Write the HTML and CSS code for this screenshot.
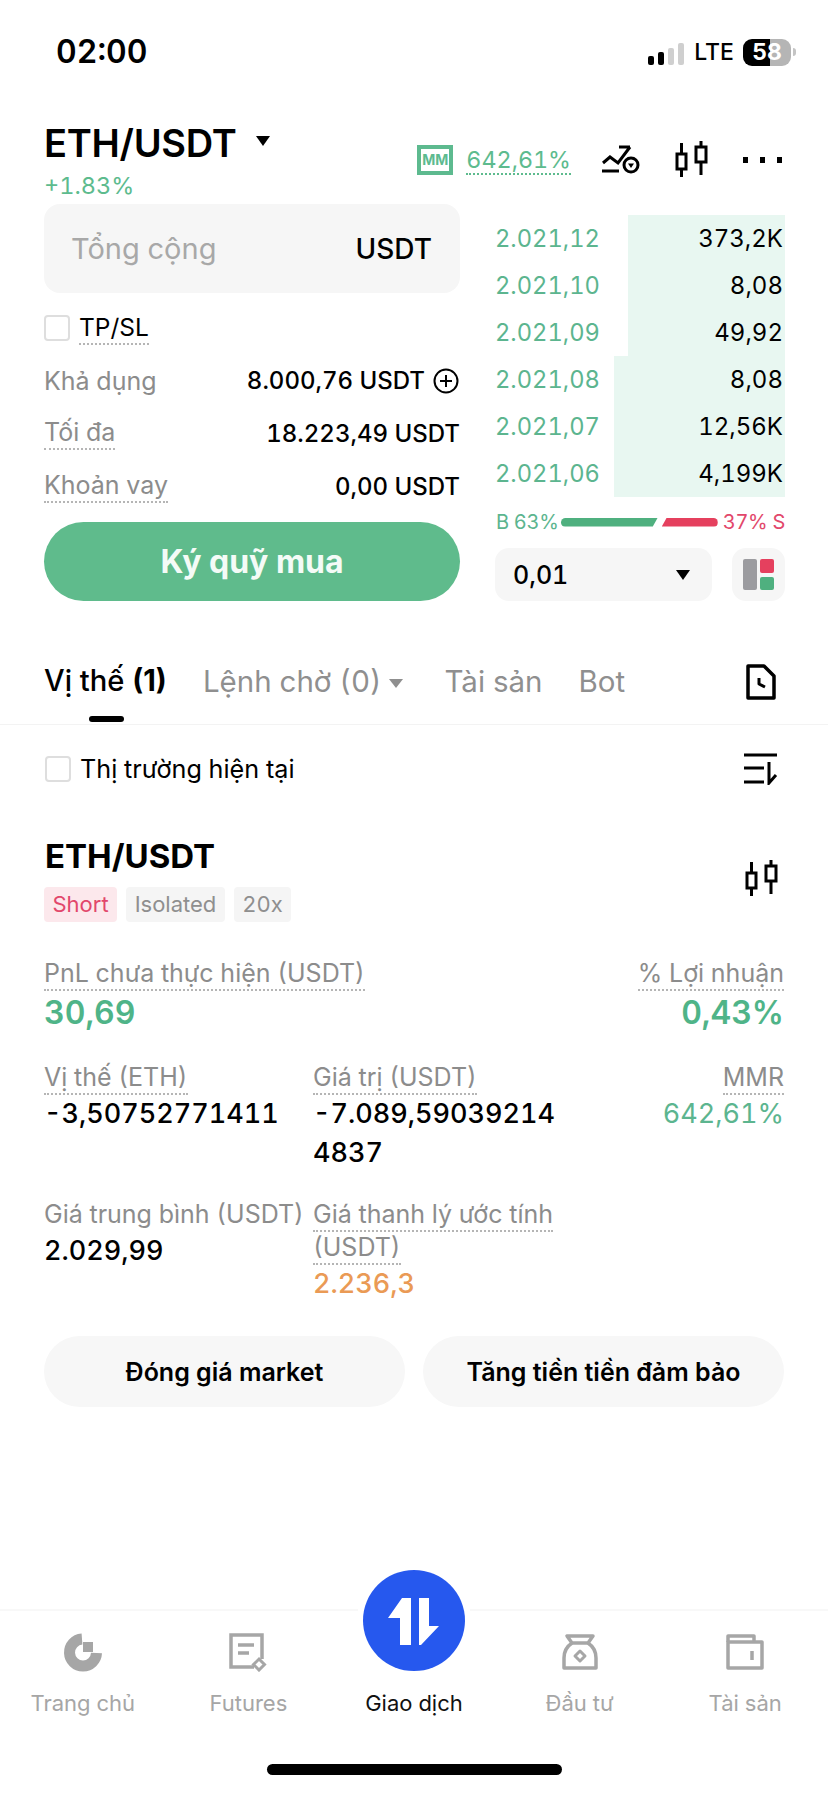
FILE: index.html
```html
<!DOCTYPE html>
<html lang="vi">
<head>
    <meta charset="UTF-8">
    <meta name="viewport" content="width=device-width, initial-scale=1.0">
    <title>ETH/USDT</title>
    <link rel="stylesheet" href="styles.css">
</head>
<body>

    <div class="status">
        <span class="time">02:00</span>
        <div class="status-right">
            <div class="signal">
                <i class="on h1"></i><i class="on h2"></i><i class="h3"></i><i class="h4"></i>
            </div>
            <span class="lte">LTE</span>
            <div class="battery">58</div>
            <i class="nub"></i>
        </div>
    </div>

    <div class="pair-bar">
        <div>
            <div class="pair">ETH/USDT <i class="caret caret-big"></i></div>
            <div class="change">+1.83%</div>
        </div>
        <div class="pair-tools">
            <span class="mm">MM</span>
            <span class="mm-val">642,61%</span>
            <svg class="ic-order" width="40" height="30" viewBox="0 0 40 30" fill="none" stroke="#000" stroke-width="3">
                <path d="M2 18l7-6 8 6L29 2M18 2h11"/>
                <path d="M1 26h17"/>
                <circle cx="30" cy="20" r="7" fill="#fff"/>
                <path d="M27 18.500h6L30 23z" fill="#000" stroke="none"/>
            </svg>
            <svg class="ic-candle" width="34" height="36" viewBox="0 0 34 36" fill="none" stroke="#000" stroke-width="3">
                <rect x="2" y="13" width="9" height="15"/>
                <rect x="21" y="6" width="10" height="15"/>
                <path d="M6.500 2v11M6.500 28v8M26 0v6M26 21v13"/>
            </svg>
            <div class="dots"><i></i><i></i><i></i></div>
        </div>
    </div>

    <div class="trade">
        <div class="trade-left">
            <div class="total-input">
                <span class="placeholder">Tổng cộng</span>
                <span class="unit">USDT</span>
            </div>
            <div class="check-row tpsl">
                <i class="checkbox"></i>
                <span class="dotted">TP/SL</span>
            </div>
            <div class="info-row">
                <span class="info-label">Khả dụng</span>
                <span class="info-val">8.000,76 USDT
                    <svg width="26" height="26" viewBox="0 0 26 26" fill="none" stroke="#000" stroke-width="2">
                        <circle cx="13" cy="13" r="11.500"/>
                        <path d="M13 7v12M7 13h12"/>
                    </svg>
                </span>
            </div>
            <div class="info-row">
                <span class="info-label dotted">Tối đa</span>
                <span class="info-val">18.223,49 USDT</span>
            </div>
            <div class="info-row">
                <span class="info-label dotted">Khoản vay</span>
                <span class="info-val">0,00 USDT</span>
            </div>
            <button class="buy-btn">Ký quỹ mua</button>
        </div>

        <div class="trade-right">
            <div class="book">
                <div class="book-row"><i class="depth" style="width: 157px"></i><span class="price">2.021,12</span><span class="vol">373,2K</span></div>
                <div class="book-row"><i class="depth" style="width: 157px"></i><span class="price">2.021,10</span><span class="vol">8,08</span></div>
                <div class="book-row"><i class="depth" style="width: 157px"></i><span class="price">2.021,09</span><span class="vol">49,92</span></div>
                <div class="book-row"><i class="depth" style="width: 171px"></i><span class="price">2.021,08</span><span class="vol">8,08</span></div>
                <div class="book-row"><i class="depth" style="width: 171px"></i><span class="price">2.021,07</span><span class="vol">12,56K</span></div>
                <div class="book-row"><i class="depth" style="width: 171px"></i><span class="price">2.021,06</span><span class="vol">4,199K</span></div>
            </div>
            <div class="ratio">
                <span class="ratio-b">B 63%</span>
                <i class="bar-b"></i>
                <i class="bar-s"></i>
                <span class="ratio-s">37% S</span>
            </div>
            <div class="depth-tools">
                <div class="depth-select">
                    <span>0,01</span>
                    <i class="caret caret-big"></i>
                </div>
                <div class="layout-btn">
                    <i class="lay-gray"></i>
                    <div class="lay-col"><i class="lay-red"></i><i class="lay-green"></i></div>
                </div>
            </div>
        </div>
    </div>

    <div class="tabs">
        <span class="tab active">Vị thế <b>(1)</b></span>
        <span class="tab tab-drop">Lệnh chờ (0) <i class="caret caret-gray"></i></span>
        <span class="tab">Tài sản</span>
        <span class="tab">Bot</span>
        <svg class="ic-history" width="30" height="36" viewBox="0 0 30 36" fill="none" stroke="#000" stroke-width="3.500" stroke-linejoin="round">
            <path d="M2 2h16l10 10v22H2z"/>
            <path d="M13 14v6l6 3" stroke-width="3"/>
        </svg>
    </div>

    <div class="filter-row">
        <div class="check-row">
            <i class="checkbox"></i>
            <span class="filter-text">Thị trường hiện tại</span>
        </div>
        <svg width="34" height="32" viewBox="0 0 34 32" fill="none" stroke="#000" stroke-width="3">
            <path d="M0 2h33M0 15h20M0 29h20M25 9v21l7-8"/>
        </svg>
    </div>

    <div class="position">
        <div class="position-head">
            <div class="position-title">ETH/USDT</div>
            <svg class="ic-candle-small" width="34" height="38" viewBox="0 0 34 36" fill="none" stroke="#000" stroke-width="3">
                <rect x="2" y="13" width="9" height="15"/>
                <rect x="21" y="6" width="10" height="15"/>
                <path d="M6.500 2v11M6.500 28v8M26 0v6M26 21v13"/>
            </svg>
        </div>
        <div class="tags">
            <span class="tag tag-short">Short</span>
            <span class="tag">Isolated</span>
            <span class="tag">20x</span>
        </div>

        <div class="stat-head">
            <div>
                <div class="stat-label"><span class="dotted">PnL chưa thực hiện (USDT)</span></div>
                <div class="stat-big green">30,69</div>
            </div>
            <div class="right">
                <div class="stat-label"><span class="dotted">% Lợi nhuận</span></div>
                <div class="stat-big green">0,43%</div>
            </div>
        </div>

        <div class="stat-grid">
            <div>
                <div class="stat-label"><span class="dotted">Vị thế (ETH)</span></div>
                <div class="stat-val">-3,50752771411</div>
            </div>
            <div>
                <div class="stat-label"><span class="dotted">Giá trị (USDT)</span></div>
                <div class="stat-val">-7.089,59039214<br>4837</div>
            </div>
            <div class="right">
                <div class="stat-label"><span class="dotted">MMR</span></div>
                <div class="stat-val mmr-val">642,61%</div>
            </div>
            <div>
                <div class="stat-label">Giá trung bình (USDT)</div>
                <div class="stat-val">2.029,99</div>
            </div>
            <div>
                <div class="stat-label"><span class="dotted">Giá thanh lý ước tính<br>(USDT)</span></div>
                <div class="stat-val orange">2.236,3</div>
            </div>
        </div>

        <div class="actions">
            <button class="action-btn">Đóng giá market</button>
            <button class="action-btn">Tăng tiền tiền đảm bảo</button>
        </div>
    </div>

    <div class="nav">
        <div class="nav-items">
            <div class="nav-item">
                <svg width="40" height="40" viewBox="0 0 40 40" fill="none">
                    <path d="M19 7A13.500 13.500 0 1 0 33.500 21" stroke="#a6a6a6" stroke-width="11"/>
                    <rect x="20" y="10" width="10" height="10" fill="#a6a6a6"/>
                </svg>
                <span>Trang chủ</span>
            </div>
            <div class="nav-item">
                <svg width="40" height="40" viewBox="0 0 40 40" fill="none" stroke="#a6a6a6" stroke-width="3.500">
                    <path d="M26 35H3V3h31v24"/>
                    <path d="M10 13h16M10 21h11"/>
                    <path d="M31 27l5.500 5.500L31 38l-5.500-5.500z" stroke-width="3"/>
                </svg>
                <span>Futures</span>
            </div>
            <div class="nav-item nav-active">
                <div class="trade-circle">
                    <svg width="102" height="101" viewBox="0 0 102 101" fill="#fff">
                        <path d="M48 28v47H37V48H25l14-20z"/>
                        <path d="M56 28h10v28h10L58 75h-2z"/>
                    </svg>
                </div>
                <i class="nav-spacer"></i>
                <span>Giao dịch</span>
            </div>
            <div class="nav-item">
                <svg width="40" height="40" viewBox="0 0 40 40" fill="none" stroke="#a6a6a6" stroke-width="3.500" stroke-linejoin="round">
                    <path d="M7 4h26l-5 7H12z"/>
                    <path d="M12 11C6 15 4 21 4 26v10h32V26c0-5-2-11-8-15"/>
                    <path d="M20 19l5 5-5 5-5-5z" stroke-width="3"/>
                </svg>
                <span>Đầu tư</span>
            </div>
            <div class="nav-item">
                <svg width="40" height="40" viewBox="0 0 40 40" fill="none" stroke="#a6a6a6" stroke-width="3.500" stroke-linejoin="round">
                    <path d="M3 10V4h26v6"/>
                    <path d="M3 10h34v26H3z"/>
                    <path d="M27 19v9"/>
                </svg>
                <span>Tài sản</span>
            </div>
        </div>
        <div class="home-bar"></div>
    </div>

</body>
</html>
```

FILE: styles.css
```css
* {
    box-sizing: border-box;
}
body {
    margin: 0;
    width: 828px;
    height: 1793px;
    overflow: hidden;
    display: flex;
    flex-direction: column;
    font-family: Inter, "Noto Sans", sans-serif;
    font-variant-numeric: tabular-nums;
    background-color: #fff;
    color: #000;
}
i {
    display: block;
}
button {
    font-family: inherit;
    border: none;
    cursor: pointer;
}
.green {
    color: #4fb488;
}
.orange {
    color: #ea9a55;
}
.right {
    text-align: right;
}
.dotted {
    padding-bottom: 1px;
    border-bottom: 2px dotted #b5b5b5;
}
.caret {
    width: 0;
    height: 0;
    border-style: solid;
    border-color: #000 transparent transparent;
}
.caret-big {
    border-width: 10px 7px 0;
}
.caret-gray {
    display: inline-block;
    vertical-align: middle;
    margin-left: 0;
    border-width: 9px 7px 0;
    border-top-color: #8f8f8f;
}

/* status bar */
.status {
    height: 100px;
    flex: none;
    display: flex;
    justify-content: space-between;
    align-items: center;
    padding: 2px 32px 0 56px;
}
.time {
    font-size: 32px;
    font-weight: 600;
}
.status-right {
    display: flex;
    align-items: center;
    margin-top: 2px;
}
.signal {
    display: flex;
    align-items: flex-end;
    gap: 4px;
    height: 22px;
    margin-top: 3px;
}
.signal i {
    width: 6px;
    border-radius: 2px;
    background-color: #cfcfcf;
}
.signal .on {
    background-color: #000;
}
.h1 { height: 9px; }
.h2 { height: 13px; }
.h3 { height: 17px; }
.h4 { height: 22px; }
.lte {
    margin-left: 10px;
    font-size: 23px;
    font-weight: 500;
}
.battery {
    width: 48px;
    height: 27px;
    margin-left: 9px;
    border-radius: 9px;
    background: linear-gradient(90deg, #000 56%, #b5b5b5 56%);
    color: #fff;
    font-size: 23px;
    font-weight: 700;
    line-height: 27px;
    text-align: center;
}
.nub {
    width: 3px;
    height: 8px;
    margin-left: 2px;
    border-radius: 0 3px 3px 0;
    background-color: #c4c4c4;
}

/* pair header */
.pair-bar {
    height: 104px;
    flex: none;
    display: flex;
    justify-content: space-between;
    padding: 23px 46px 0 44px;
}
.pair {
    display: flex;
    align-items: center;
    gap: 20px;
    font-size: 38px;
    font-weight: 600;
    line-height: 40px;
    letter-spacing: -0.3px;
}
.pair .caret {
    margin-top: -4px;
}
.change {
    margin-top: 10px;
    font-size: 23.500px;
    line-height: 26px;
    color: #5dbb8e;
}
.pair-tools {
    display: flex;
    align-items: flex-start;
    margin-top: 18px;
    margin-left: auto;
}
.mm {
    width: 36px;
    height: 30px;
    margin-top: 4px;
    border: 4px solid #5dba8f;
    color: #5dba8f;
    font-size: 14px;
    font-weight: 700;
    line-height: 22px;
    text-align: center;
}
.mm-val {
    margin-left: 13px;
    margin-top: 5px;
    font-size: 23.300px;
    line-height: 27px;
    color: #5dbb8e;
    border-bottom: 2px dotted #5dbb8e;
}
.ic-order {
    margin-left: 30px;
    margin-top: 4px;
}
.ic-candle {
    margin-left: 34px;
}
.dots {
    display: flex;
    gap: 12px;
    margin-left: 34px;
    margin-top: 16px;
}
.dots i {
    width: 5px;
    height: 6px;
    background-color: #000;
}

/* order form + order book */
.trade {
    flex: none;
    display: flex;
    gap: 35px;
    padding-left: 44px;
}
.trade-left {
    width: 416px;
}
.total-input {
    height: 89px;
    display: flex;
    justify-content: space-between;
    align-items: center;
    padding: 0 28px 0 27px;
    border-radius: 16px;
    background-color: #f6f6f6;
}
.placeholder {
    font-size: 29px;
    color: #a8a8a8;
}
.unit {
    font-size: 28px;
    font-weight: 500;
}
.check-row {
    display: flex;
    align-items: center;
    gap: 9px;
    font-size: 24.500px;
}
.tpsl {
    margin-top: 22px;
    height: 26px;
}
.checkbox {
    width: 26px;
    height: 26px;
    border: 2px solid #dedede;
    border-radius: 4px;
}
.info-row {
    height: 53px;
    display: flex;
    justify-content: space-between;
    align-items: center;
}
.tpsl + .info-row {
    margin-top: 13px;
}
.info-label {
    font-size: 25px;
    color: #8c8c8c;
}
.info-val {
    display: flex;
    align-items: center;
    gap: 8px;
    font-size: 24px;
    font-weight: 500;
}
.info-val svg {
    margin-right: 1px;
}
.buy-btn {
    display: block;
    width: 100%;
    height: 79px;
    margin-top: 9px;
    border-radius: 40px;
    background-color: #5fbb8c;
    color: #f4fbf7;
    font-size: 32px;
    font-weight: 700;
}
.trade-right {
    width: 290px;
}
.book {
    margin-top: 11px;
}
.book-row {
    position: relative;
    height: 47px;
    display: flex;
    justify-content: space-between;
    align-items: center;
    padding: 0 2px 0 0;
}
.depth {
    position: absolute;
    top: 0;
    right: 0;
    bottom: 0;
    background-color: #e8f7f1;
}
.price {
    position: relative;
    font-size: 23.700px;
    color: #5cb58f;
}
.vol {
    position: relative;
    font-size: 24px;
}
.ratio {
    display: flex;
    align-items: center;
    margin-top: 13px;
    height: 24px;
    font-size: 20px;
}
.ratio-b {
    width: 66px;
    padding-left: 1px;
    color: #5cb58f;
    letter-spacing: -0.3px;
}
.bar-b {
    width: 97px;
    height: 9px;
    border-radius: 5px 0 0 5px;
    background-color: #4fb07f;
    clip-path: polygon(0 0, 100% 0, calc(100% - 5px) 100%, 0 100%);
}
.bar-s {
    width: 56px;
    height: 9px;
    margin-left: 4px;
    border-radius: 0 5px 5px 0;
    background-color: #e5405e;
    clip-path: polygon(5px 0, 100% 0, 100% 100%, 0 100%);
}
.ratio-s {
    margin-left: 5px;
    color: #e2476b;
    white-space: nowrap;
    letter-spacing: -0.3px;
}
.depth-tools {
    display: flex;
    justify-content: space-between;
    margin-top: 14px;
}
.depth-select {
    width: 217px;
    height: 53px;
    display: flex;
    justify-content: space-between;
    align-items: center;
    padding: 0 22px 0 18px;
    border-radius: 14px;
    background-color: #f6f6f6;
    font-size: 25px;
    font-weight: 500;
}
.layout-btn {
    width: 53px;
    height: 53px;
    display: flex;
    justify-content: center;
    align-items: center;
    gap: 3px;
    border-radius: 14px;
    background-color: #f6f6f6;
}
.lay-gray {
    width: 14px;
    height: 31px;
    border-radius: 2px;
    background-color: #9c9ca0;
}
.lay-col {
    display: flex;
    flex-direction: column;
    gap: 4px;
}
.lay-red,
.lay-green {
    width: 14px;
    height: 13.500px;
    border-radius: 2px;
}
.lay-red {
    background-color: #e5405e;
}
.lay-green {
    background-color: #4fb07f;
}

/* tabs */
.tabs {
    flex: none;
    height: 124px;
    display: flex;
    align-items: flex-start;
    gap: 36px;
    padding: 60px 52px 0 44px;
    border-bottom: 1px solid #f3f3f3;
}
.tab {
    position: relative;
    font-size: 29.500px;
    line-height: 40px;
    color: #8f8f8f;
    white-space: nowrap;
}
.tab.active {
    font-size: 29.200px;
    font-weight: 500;
    font-variant-numeric: normal;
    color: #000;
}
.tab.active::after {
    content: "";
    position: absolute;
    left: 45px;
    top: 55px;
    width: 35px;
    height: 6px;
    border-radius: 3px;
    background-color: #000;
}
.tab-drop {
    margin-right: 5px;
}
.ic-history {
    margin-left: auto;
    margin-top: 3px;
}

.filter-row {
    flex: none;
    height: 88px;
    display: flex;
    justify-content: space-between;
    align-items: center;
    padding: 0 50px 0 45px;
}
.filter-text {
    font-size: 25.200px;
}

/* position card */
.position {
    flex: none;
    margin-top: 23px;
    padding: 0 44px;
}
.position-head {
    height: 40px;
    display: flex;
    justify-content: space-between;
    align-items: flex-start;
}
.position-title {
    padding-left: 1px;
    font-size: 33px;
    font-weight: 700;
    line-height: 40px;
}
.ic-candle-small {
    margin-top: 23px;
    margin-right: 5px;
}
.tags {
    display: flex;
    gap: 9px;
    margin-top: 11px;
    height: 35px;
}
.tag {
    padding: 0 8.500px;
    border-radius: 4px;
    background-color: #f5f5f5;
    font-size: 22px;
    line-height: 35px;
    color: #8f8f8f;
}
.tag-short {
    background-color: #fce8ec;
    color: #e2476b;
}
.stat-head {
    display: flex;
    justify-content: space-between;
    margin-top: 35px;
}
.stat-label {
    font-size: 25px;
    line-height: 33px;
    color: #8c8c8c;
    white-space: nowrap;
}
.stat-big {
    margin-top: 4px;
    font-size: 32px;
    font-weight: 600;
    line-height: 38px;
}
.stat-grid {
    display: grid;
    grid-template-columns: 269px 1fr auto;
    row-gap: 26px;
    margin-top: 29px;
}
.stat-val {
    font-size: 27px;
    font-weight: 500;
    line-height: 39px;
}
.mmr-val {
    font-weight: 400;
    color: #5cb58f;
}
.actions {
    display: flex;
    gap: 18px;
    margin-top: 33px;
}
.action-btn {
    flex: 1;
    height: 71px;
    border-radius: 36px;
    background-color: #f7f7f7;
    color: #000;
    font-size: 25px;
    font-weight: 600;
}

/* bottom nav */
.nav {
    margin-top: auto;
    height: 184px;
    flex: none;
    border-top: 2px solid #f8f8f8;
}
.nav-items {
    display: grid;
    grid-template-columns: repeat(5, 1fr);
    padding-top: 21px;
}
.nav-item {
    position: relative;
    display: flex;
    flex-direction: column;
    align-items: center;
    font-size: 22px;
    line-height: 28px;
    color: #a6a6a6;
}
.nav-item span {
    margin-top: 17px;
}
.nav-spacer {
    height: 40px;
}
.nav-active {
    color: #111;
}
.trade-circle {
    position: absolute;
    top: -62px;
    left: 32px;
    width: 102px;
    height: 101px;
    border-radius: 50%;
    background-color: #2658ee;
    box-shadow: 0 0 0 6px #fff;
}
.trade-circle svg {
    display: block;
}
.home-bar {
    width: 295px;
    height: 11px;
    margin: 47px auto 0;
    border-radius: 6px;
    background-color: #000;
}
```
